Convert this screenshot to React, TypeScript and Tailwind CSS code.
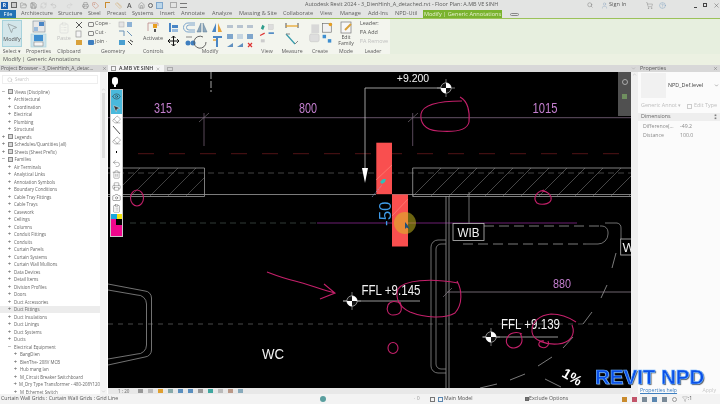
import { Camera, ChevronDown, ClipboardList, Eraser, Eye, Filter, FolderOpen, HelpCircle, Home, MousePointer2, Printer, Redo2, RefreshCw, Ruler, Save, Search, ShoppingCart, Tag, Trash2, Undo2, User, X } from 'lucide-react';

const tabs = [
    { label: 'Architecture', cls: 'w-[37px]' },
    { label: 'Structure', cls: 'w-[30px]' },
    { label: 'Steel', cls: 'w-[19px]' },
    { label: 'Precast', cls: 'w-[25px]' },
    { label: 'Systems', cls: 'w-[28px]' },
    { label: 'Insert', cls: 'w-[21px]' },
    { label: 'Annotate', cls: 'w-[31px]' },
    { label: 'Analyze', cls: 'w-[27px]' },
    { label: 'Massing & Site', cls: 'w-[44px]' },
    { label: 'Collaborate', cls: 'w-[37px]' },
    { label: 'View', cls: 'w-[20px]' },
    { label: 'Manage', cls: 'w-[28px]' },
    { label: 'Add-Ins', cls: 'w-[27px]' },
    { label: 'NPD-Util', cls: 'w-[27px]' },
];

// level: 0 discipline row, 1 category, 2 family
const tree: { label: string; level: number; open?: boolean; hover?: boolean; icon?: boolean }[] = [
    { label: 'Views (Discipline)', level: 0, open: true, icon: true },
    { label: 'Architectural', level: 1 },
    { label: 'Coordination', level: 1 },
    { label: 'Electrical', level: 1 },
    { label: 'Plumbing', level: 1 },
    { label: 'Structural', level: 1 },
    { label: 'Legends', level: 0, icon: true },
    { label: 'Schedules/Quantities (all)', level: 0, icon: true },
    { label: 'Sheets (Sheet Prefix)', level: 0, icon: true },
    { label: 'Families', level: 0, open: true, icon: true },
    { label: 'Air Terminals', level: 1 },
    { label: 'Analytical Links', level: 1 },
    { label: 'Annotation Symbols', level: 1 },
    { label: 'Boundary Conditions', level: 1 },
    { label: 'Cable Tray Fittings', level: 1 },
    { label: 'Cable Trays', level: 1 },
    { label: 'Casework', level: 1 },
    { label: 'Ceilings', level: 1 },
    { label: 'Columns', level: 1 },
    { label: 'Conduit Fittings', level: 1 },
    { label: 'Conduits', level: 1 },
    { label: 'Curtain Panels', level: 1 },
    { label: 'Curtain Systems', level: 1 },
    { label: 'Curtain Wall Mullions', level: 1 },
    { label: 'Data Devices', level: 1 },
    { label: 'Detail Items', level: 1 },
    { label: 'Division Profiles', level: 1 },
    { label: 'Doors', level: 1 },
    { label: 'Duct Accessories', level: 1 },
    { label: 'Duct Fittings', level: 1, hover: true },
    { label: 'Duct Insulations', level: 1 },
    { label: 'Duct Linings', level: 1 },
    { label: 'Duct Systems', level: 1 },
    { label: 'Ducts', level: 1 },
    { label: 'Electrical Equipment', level: 1, open: true },
    { label: 'BangDien', level: 2 },
    { label: 'BienThe- 208V MCB', level: 2 },
    { label: 'Hub mang lan', level: 2 },
    { label: 'M_Circuit Breaker Switchboard', level: 2 },
    { label: 'M_Dry Type Transformer - 480-208Y120', level: 2 },
    { label: 'M_Ethernet Switch', level: 2 },
];

function TreeRow({ label, level, open, hover, icon }: (typeof tree)[number]) {
    const indent = level === 0 ? 'pl-[1px]' : level === 1 ? 'pl-[7px]' : 'pl-[13px]';
    return (
        <div className={`h-[7.5px] shrink-0 flex items-center whitespace-nowrap ${indent} ${hover ? 'bg-[#ececec]' : ''}`}>
            <span className="w-[5px] text-center text-[6px] leading-none text-[#555]">{open ? '−' : '+'}</span>
            {icon ? <span className="ml-[1.5px] mr-[2px] w-[5px] h-[5px] border border-[#8a8a8a] bg-[#d8d8d8]" /> : <span className="w-[2px]" />}
            <span className="text-[4.4px] leading-none text-[#666]">{label}</span>
        </div>
    );
}

function RibbonGroup({ label, cls, children }: { label: string; cls: string; children?: React.ReactNode }) {
    return (
        <div className={`${cls} shrink-0 flex flex-col`}>
            <div className="flex-1 relative min-h-0">{children}</div>
            <div className="h-[6px] text-center text-[5.2px] leading-[6px] text-[#5c5c5c] whitespace-nowrap">{label}</div>
        </div>
    );
}

function SmallText({ children, gray, cls = '' }: { children: React.ReactNode; gray?: boolean; cls?: string }) {
    return <span className={`text-[5.4px] leading-none whitespace-nowrap ${gray ? 'text-[#c0c0c0]' : 'text-[#555]'} ${cls}`}>{children}</span>;
}

function ModifyIcons() {
    return (
        <svg width="92" height="29" viewBox="0 0 92 29" className="block mt-[1px] ml-[5px]">
            <rect x="1" y="3" width="2" height="9" fill="#4a86c5" />
            <rect x="4" y="5" width="6" height="3" fill="#4a86c5" />
            <rect x="4" y="9" width="6" height="3" fill="#9bbcdc" />
            <path d="M27 3h-7a4 4 0 0 0 0 9h7M27 5h-6a2.500 2.500 0 0 0 0 5h6" fill="none" stroke="#7fa6cc" />
            <path d="M29 12l4-9v9zM35 3l4 9h-4z" fill="#8fa9bd" stroke="#5f7f98" strokeWidth="0.5" />
            <path d="M44 12l4-9v9z" fill="#4a86c5" />
            <path d="M50 3l4 9h-4z" fill="#e8a33a" />
            <g transform="translate(-3 0)">
                <path d="M3 21h11M8.500 16v10M3 21l2-2M3 21l2 2M14 21l-2-2M14 21l-2 2M8.500 16l-2 2M8.500 16l2 2M8.500 26l-2-2M8.500 26l2-2" stroke="#111" fill="none" strokeWidth="1" />
            </g>
            <circle cx="20" cy="23" r="2.500" fill="#3f7fc0" />
            <circle cx="25" cy="23" r="2.500" fill="#3f7fc0" />
            <path d="M18 17h6" stroke="#888" strokeWidth="1" />
            <g transform="translate(-9 2)">
                <path d="M44 15a6 6 0 1 0 3 5" fill="none" stroke="#555" strokeWidth="0.900" />
            </g>
            <g transform="translate(-7 2)">
                <path d="M52 15h9M56 15v10" stroke="#4a86c5" strokeWidth="2" />
                <path d="M52 18h3" stroke="#e8a33a" strokeWidth="1.500" />
            </g>
            {[59, 69, 79].map(x => (
                <g key={x}>
                    <rect x={x} y="5" width="6" height="3" fill="#b8c4d0" />
                    <rect x={x} y="14" width="6" height="5" fill="#7fa6cc" opacity={x === 69 ? 0.4 : 1} />
                    {x !== 79 && <path d={`M${x} 27l6-4v4z`} fill="#5f8fbf" />}
                </g>
            ))}
            <path d="M80 23l4 4M84 23l-4 4" stroke="#d33" strokeWidth="1.200" />
        </svg>
    );
}

function Ribbon() {
    return (
        <div className="h-[36px] flex bg-[#e7efdf] border-t border-[#9cc25a]">
            <div className="w-[390px] flex bg-[#f3f5ee] pl-[2px]">
                <RibbonGroup label="Select ▾" cls="w-[20px]">
                    <div className="mt-[0.5px] w-[20px] h-[27px] bg-[#d3e6ea] border border-[#a6d2dc] flex flex-col items-center">
                        <MousePointer2 size={12} strokeWidth={0.8} className="text-[#555] mt-[1px]" />
                        <SmallText cls="mt-[3px]">Modify</SmallText>
                    </div>
                </RibbonGroup>
                <RibbonGroup label="Properties" cls="w-[33px]">
                    <svg width="30" height="29" viewBox="0 0 30 29" className="block ml-[3px]">
                        <rect x="8" y="2" width="12" height="11" fill="#e8e8e8" stroke="#7a8a98" strokeWidth="0.600" />
                        <rect x="14" y="3" width="5" height="4" fill="#4a86c5" />
                        <rect x="9" y="8" width="4" height="4" fill="#9bbcdc" />
                        <rect x="6" y="15" width="15" height="13" fill="#cfe3ea" stroke="#a6d2dc" strokeWidth="0.600" />
                        <rect x="9" y="16" width="9" height="6" fill="#3f8fd0" />
                        <rect x="9" y="23" width="9" height="4" fill="#f5f5f5" stroke="#777" strokeWidth="0.500" />
                    </svg>
                </RibbonGroup>
                <RibbonGroup label="Clipboard" cls="w-[28px]">
                    <div className="absolute left-[2px] top-[3px] w-[14px] flex flex-col items-center">
                        <ClipboardList size={12} strokeWidth={0.9} className="text-[#cfcfcf]" />
                        <SmallText gray cls="mt-[2px]">Paste</SmallText>
                    </div>
                    <svg width="10" height="28" viewBox="0 0 10 28" className="absolute left-[19px] top-0">
                        <path d="M2 3l6 6M8 3L2 9" stroke="#444" strokeWidth="0.900" />
                        <rect x="2" y="12" width="5" height="6" fill="#f4f4f4" stroke="#888" strokeWidth="0.600" />
                        <rect x="2" y="21" width="6" height="5" fill="#d9a13b" />
                    </svg>
                </RibbonGroup>
                <RibbonGroup label="Geometry" cls="w-[60px]">
                    <div className="absolute left-[5px] top-[2px] flex flex-col gap-[3px]">
                        {['Cope ·', 'Cut ·', 'Join ·'].map((t, i) => (
                            <div key={t} className="h-[6px] flex items-center gap-[1px]">
                                <span className={`w-[6px] h-[5px] rounded-[1px] ${i === 2 ? 'bg-[#3f7fc0]' : 'border border-[#888]'}`} />
                                <SmallText>{t}</SmallText>
                            </div>
                        ))}
                    </div>
                    <svg width="22" height="28" viewBox="0 0 22 28" className="absolute left-[35px] top-0">
                        <rect x="1" y="3" width="5" height="5" fill="#e4e4e4" stroke="#aaa" strokeWidth="0.500" />
                        <rect x="9" y="3" width="5" height="5" fill="#4a86c5" opacity="0.600" />
                        <path d="M1 12h5v5M9 12l5 5" stroke="#6b93b8" fill="none" />
                        <rect x="1" y="21" width="6" height="5" fill="#4a9fd0" />
                        <path d="M10 22l4 4M12 21l3 2" stroke="#444" />
                    </svg>
                </RibbonGroup>
                <RibbonGroup label="Controls" cls="w-[20px]">
                    <div className="absolute left-0 right-0 top-[2px] flex flex-col items-center">
                        <svg width="14" height="12" viewBox="0 0 14 12">
                            <path d="M2 2v8M2 2h10M12 2v3" stroke="#b88" fill="none" strokeWidth="0.800" />
                            <rect x="7" y="3" width="4" height="4" fill="#e8a020" />
                            <rect x="8" y="8" width="2" height="3" fill="#555" />
                        </svg>
                        <SmallText cls="mt-[3px]">Activate</SmallText>
                    </div>
                </RibbonGroup>
                <RibbonGroup label="Modify" cls="w-[94px]"><ModifyIcons /></RibbonGroup>
                <RibbonGroup label="View" cls="w-[20px]">
                    <svg width="20" height="29" viewBox="0 0 26 29" className="block">
                        <path d="M7 3l3 2-2 5-3-2z" fill="#2e9d8c" />
                        <rect x="15" y="3" width="6" height="6" fill="#ddd" stroke="#bbb" strokeWidth="0.500" />
                        <path d="M4 17l6-3" stroke="#d33" strokeWidth="1.500" />
                        <path d="M15 13h7v2h-7z" fill="#3f7fc0" />
                        <rect x="5" y="22" width="5" height="4" fill="#ccc" />
                    </svg>
                </RibbonGroup>
                <RibbonGroup label="Measure" cls="w-[30px]">
                    <svg width="24" height="29" viewBox="0 0 24 29" className="block ml-[6px]">
                        <path d="M3 4v5M15 4v5" stroke="#555" />
                        <path d="M3 7h12" stroke="#e8a020" strokeWidth="1.200" />
                        <path d="M3 15l9 10" stroke="#39a" strokeWidth="1.200" />
                        <path d="M3 15h4M12 25l3-3" stroke="#888" />
                    </svg>
                </RibbonGroup>
                <RibbonGroup label="Create" cls="w-[26px]">
                    <svg width="26" height="29" viewBox="0 0 30 29" className="block">
                        <rect x="5" y="4" width="9" height="10" fill="#d8d8d8" />
                        <rect x="3" y="15" width="11" height="9" rx="2" fill="#dedede" stroke="#bbb" strokeWidth="0.500" />
                        <rect x="18" y="3" width="10" height="10" fill="#f2f2f2" stroke="#666" strokeWidth="0.700" />
                        <circle cx="27" cy="4" r="2" fill="#e8a020" />
                        <rect x="18" y="16" width="4" height="4" fill="#3f8fd0" />
                        <rect x="24" y="21" width="4" height="4" fill="#3f8fd0" />
                    </svg>
                </RibbonGroup>
                <RibbonGroup label="Mode" cls="w-[26px]">
                    <div className="absolute left-0 right-0 top-[2px] flex flex-col items-center">
                        <svg width="13" height="13" viewBox="0 0 13 13">
                            <rect x="1" y="1" width="10" height="11" fill="#f7f7f7" stroke="#777" strokeWidth="0.700" />
                            <path d="M5 9l6-6" stroke="#d9a13b" strokeWidth="2" />
                        </svg>
                        <span className="text-[5.2px] leading-[6px] text-[#555] text-center">Edit<br />Family</span>
                    </div>
                </RibbonGroup>
                <RibbonGroup label="Leader" cls="w-[28px]">
                    <div className="absolute left-[1px] top-[2px] flex flex-col gap-[3.6px]">
                        <SmallText>Leader:</SmallText>
                        <SmallText>ᖴA Add</SmallText>
                        <SmallText gray>ᖴA Remove</SmallText>
                    </div>
                </RibbonGroup>
            </div>
        </div>
    );
}

function LevelMark({ x, y }: { x: number; y: number }) {
    return (
        <g>
            <path d={`M${x - 9} ${y}h18M${x} ${y - 9}v18`} stroke="#bdbdbd" strokeWidth="0.600" />
            <circle cx={x} cy={y} r="5.200" fill="#111" stroke="#ddd" strokeWidth="0.600" />
            <path d={`M${x} ${y}V${y - 5.2}A5.200 5.200 0 0 1 ${x + 5.2} ${y}z M${x} ${y}V${y + 5.2}A5.200 5.200 0 0 1 ${x - 5.2} ${y}z`} fill="#fff" />
        </g>
    );
}

const leftHatch = [112, 131, 150, 168, 186];
const rightHatch = [413, 431, 449, 467, 485, 503, 521, 539, 557, 575, 593, 611, 629];

function DrawingCanvas() {
    const pink = '#c4206a';
    const dim = '#c47fcf';
    return (
        <svg viewBox="108 72 523 316" className="absolute inset-0 w-full h-full" fontFamily="'Liberation Sans', Arial, sans-serif">
            <path d="M211 72v20" stroke="#8a8a8a" strokeWidth="1.200" strokeDasharray="7 2" />

            {/* dimensions */}
            <path d="M108 117.700H631" stroke="#6e5a70" strokeWidth="0.900" />
            <path d="M204 113V146M412.700 113V146" stroke="#6e5a70" strokeWidth="0.800" />
            <path d="M199 122l10-9M408 122l10-9M123 113l-5 5" stroke="#8a7f8a" strokeWidth="0.600" />
            <text x="163" y="113" fill={dim} fontSize="14" textAnchor="middle" textLength="18" lengthAdjust="spacingAndGlyphs">315</text>
            <text x="308" y="113" fill={dim} fontSize="14" textAnchor="middle" textLength="18" lengthAdjust="spacingAndGlyphs">800</text>
            <text x="545" y="113" fill={dim} fontSize="14" textAnchor="middle" textLength="25" lengthAdjust="spacingAndGlyphs">1015</text>

            {/* grid and reference lines */}
            <path d="M138 153.700H625" stroke="#5a1518" strokeWidth="0.900" strokeDasharray="16 15" />
            <path d="M108 173H631" stroke="#5e5e5e" strokeWidth="0.700" strokeDasharray="6 4" />
            <path d="M130 223H317" stroke="#3e4a44" strokeWidth="0.800" strokeDasharray="6 4" />
            <path d="M317 223H577" stroke="#6c1f72" strokeWidth="1.100" />
            <path d="M108 324H631" stroke="#5a5a5a" strokeWidth="0.800" strokeDasharray="5 5" />

            {/* walls */}
            <clipPath id="left-wall"><rect x="108" y="168" width="96.500" height="28" /></clipPath>
            <g clipPath="url(#left-wall)" stroke="#6b6b6b" strokeWidth="0.600">
                {leftHatch.map(x => <path key={x} d={`M${x} 196l28-28`} />)}
            </g>
            <path d="M108 168H204.500V196.500H108" fill="none" stroke="#9a9a9a" strokeWidth="0.800" />
            <g stroke="#777" strokeWidth="0.600">
                {rightHatch.map(x => <path key={x} d={`M${x} 196l${x > 612 ? 18 : 28}-${x > 612 ? 18 : 28}`} />)}
            </g>
            <path d="M631 168H412.700V196.500H631" fill="none" stroke="#a0a0a0" strokeWidth="0.800" />
            <path d="M108 194.500H376M392 194.500H631" stroke="#9a9a9a" strokeWidth="0.800" />

            {/* lower structure */}
            <path d="M446 196V388M449 196V388" stroke="#9a9a9a" strokeWidth="0.800" />
            <path d="M469 192V225" stroke="#8a8a8a" strokeWidth="0.800" />
            <path d="M446 240h-8a7 7 0 0 0-7 7V366a7 7 0 0 0 7 7h8M446 244h-5a5 5 0 0 0-5 5V364a5 5 0 0 0 5 5h5" fill="none" stroke="#8a8a8a" strokeWidth="0.800" />
            <path d="M108 284l37 7a7 7 0 0 1 6.500 7V350a7 7 0 0 1-6.500 7l-37 8M108 290l29 5a9 9 0 0 1 9.500 9V345a9 9 0 0 1-9.500 9l-29 5" fill="none" stroke="#8f8f8f" strokeWidth="0.800" />
            <path d="M484 226H600M463 244H586" stroke="#9a9a9a" strokeWidth="0.800" strokeDasharray="10 5" />
            <path d="M600 226h2a6 6 0 0 1 6 6v2a10 10 0 0 1-10 10h-12M605 223h12a5 5 0 0 1 4 5v12" fill="none" stroke="#8a8a8a" strokeWidth="0.800" />
            <path d="M616 253l-4 15M607 285l-6 13M592 312l-9 12M573 337l-10 11M552 357l-14 9M525 374l-15 6M497 384l-17 4M545 379l16 8" stroke="#9a9a9a" strokeWidth="0.800" fill="none" />

            {/* second dimension line */}
            <path d="M447 292H631" stroke="#8a7f8a" strokeWidth="0.800" />
            <path d="M443 297l9-9" stroke="#8a7f8a" strokeWidth="0.600" />
            <text x="562" y="288" fill={dim} fontSize="13.500" textAnchor="middle" textLength="18" lengthAdjust="spacingAndGlyphs">880</text>

            {/* selected element */}
            <rect x="376.300" y="142.700" width="15.700" height="51.500" fill="#f94f4f" />
            <rect x="392" y="194.500" width="16" height="52" fill="#f94f4f" />
            <path d="M376 180l16-15M392 216l16-17" stroke="#ff9a8a" strokeWidth="0.500" />
            <path d="M372 197l10-12" stroke="#9ad" strokeWidth="0.600" strokeDasharray="2 1" />
            <path d="M380 182l3-3 3 0-1 3-3 2z" fill="#2fc0b8" />
            <text transform="translate(391 226) rotate(-90)" fill="#3f9be8" fontSize="17">-50</text>
            <circle cx="405" cy="223" r="11" fill="#d8c820" opacity="0.500" />
            <path d="M405 222l0 7 1.500-1.500 3 1.500-2-4z" fill="#1d4f7a" />

            {/* level */}
            <path d="M441 88H365V168" fill="none" stroke="#c4c4c4" strokeWidth="0.800" />
            <path d="M362 168h6l-3 15z" fill="#fff" />
            <text x="413" y="82" fill="#f2f2f2" fontSize="10.500" textAnchor="middle">+9.200</text>
            <LevelMark x={446} y={88} />

            {/* tags and notes */}
            <rect x="453" y="223.500" width="31" height="17" fill="#000" stroke="#bdbdbd" strokeWidth="0.800" />
            <text x="468.500" y="237" fill="#f2f2f2" fontSize="13.500" textAnchor="middle" textLength="22" lengthAdjust="spacingAndGlyphs">WIB</text>
            <rect x="620.700" y="239" width="12" height="16" fill="#000" stroke="#bdbdbd" strokeWidth="0.800" />
            <text x="622.500" y="252" fill="#f2f2f2" fontSize="13">W</text>

            <path d="M343 301H420" stroke="#bdbdbd" strokeWidth="0.800" />
            <LevelMark x={352} y={301} />
            <text x="361.500" y="295" fill="#f2f2f2" fontSize="14" textLength="59" lengthAdjust="spacingAndGlyphs">FFL +9.145</text>
            <path d="M483 337H558" stroke="#bdbdbd" strokeWidth="0.800" />
            <LevelMark x={491} y={337} />
            <text x="501" y="329" fill="#f2f2f2" fontSize="14" textLength="59" lengthAdjust="spacingAndGlyphs">FFL +9.139</text>
            <text x="273" y="359" fill="#f2f2f2" fontSize="14" textAnchor="middle" textLength="22" lengthAdjust="spacingAndGlyphs">WC</text>
            <text transform="translate(561 376) rotate(30)" fill="#fff" fontSize="14" fontWeight="700">1%</text>

            {/* red-lining */}
            <g fill="none" stroke={pink} strokeWidth="1.100">
                <path d="M267 272C280 277 286 279 295 281C308 284 322 290 335 293M324 284L335 293L320 299" />
                <path d="M460 97C468 101 470 112 469 122C467 132 450 132 438 131C424 130 420 122 421 114C423 103 445 101 462 101" />
                <ellipse cx="137" cy="198" rx="6.500" ry="8" />
                <path d="M540 191C548 190 552 196 551 200C549 205 540 205 537 203C533 199 535 192 544 190" />
                <path d="M457 281C462 290 463 304 455 313C445 319 425 318 410 312C399 307 395 298 398 289C404 280 430 278 458 283" />
                <path d="M400 302C403 310 401 315 393 315C388 315 386 310 388 305C390 301 396 300 401 304" />
                <ellipse cx="393" cy="348" rx="5" ry="5.500" />
                <path d="M572 325C576 335 570 343 558 344C545 345 533 340 532 332C531 322 540 315 551 314C562 314 570 318 576 322" />
                <path d="M520 333C524 340 522 347 514 348C508 348 505 343 507 338C509 333 516 331 522 334" />
                <path d="M548 341C550 346 545 349 541 347C537 345 539 340 544 341" />
            </g>
        </svg>
    );
}

function CanvasToolbar() {
    const iconCls = 'text-[#444]';
    return (
        <div className="absolute left-[2px] top-[17px] w-[13px] h-[148px] bg-white border border-[#c8c8c8] flex flex-col items-center">
            <div className="w-full h-[12px] bg-[#49b9dc] flex items-center justify-center"><Eye size={9} strokeWidth={1.4} className="text-[#333]" /></div>
            <div className="w-full h-[12px] bg-[#49b9dc] flex items-center justify-center"><MousePointer2 size={9} strokeWidth={1.2} className="text-white fill-[#333]" /></div>
            <div className="h-[11px] flex items-center"><Eraser size={9} strokeWidth={1} className={iconCls} /></div>
            <svg width="9" height="10" viewBox="0 0 9 10"><path d="M1 1l7 8" stroke="#555" strokeWidth="1" /></svg>
            <div className="h-[11px] flex items-center"><Eraser size={9} strokeWidth={1} className={iconCls} /></div>
            <div className="h-[12px] flex items-center"><span className="w-[1.500px] h-[1.500px] bg-black" /></div>
            <div className="h-[11px] flex items-center"><Undo2 size={9} strokeWidth={1} className={iconCls} /></div>
            <div className="h-[11px] flex items-center"><Trash2 size={9} strokeWidth={1} className={iconCls} /></div>
            <div className="h-[12px] flex items-center"><Printer size={9} strokeWidth={1} className={iconCls} /></div>
            <div className="h-[11px] flex items-center"><Camera size={9} strokeWidth={1.2} className={iconCls} /></div>
            <div className="h-[11px] flex items-center"><ClipboardList size={9} strokeWidth={1} className={iconCls} /></div>
            <div className="w-full h-[5px] flex">
                <span className="flex-1 bg-[#18a7dc]" />
                <span className="flex-1 bg-[#f4e60f]" />
            </div>
            <div className="w-full flex-1 bg-[#f0068c] relative">
                <span className="absolute right-0 top-0 w-[6px] h-[6px] bg-black" />
            </div>
        </div>
    );
}

function ViewBar() {
    return (
        <div className="h-[6px] bg-[#e8e8e8] flex items-center text-[#666]">
            <span className="ml-[10px] w-[20px] text-[4.600px] leading-none">1 : 20</span>
            <div className="flex items-center gap-[5px]">
                {['bg-[#999]', 'bg-[#bbb]', 'bg-[#e0a030]', 'bg-[#8aa]', 'bg-[#5a8fbf]', 'bg-[#5a8fbf]', 'bg-[#999]', 'bg-[#3fa7a0]', 'bg-[#bbb]', 'bg-[#b98]', 'bg-[#8ab]'].map((c, i) => (
                    <span key={i} className={`w-[5px] h-[4px] ${c}`} />
                ))}
            </div>
        </div>
    );
}

export default function App() {
    return (
        <div className="relative w-[720px] h-[404px] overflow-hidden flex flex-col bg-[#e3e4e3] blur-[0.35px] leading-none font-['Open_Sans',sans-serif]">
            {/* title bar */}
            <div className="h-[10px] flex items-center text-[#5a5a5a]">
                <span className="ml-[1px] w-[7px] h-[7px] bg-[#1f62b0] text-white text-[5px] leading-[7px] text-center font-bold">R</span>
                <div className="ml-[3px] w-[200px] flex items-center gap-[3px]">
                    <span className="w-[6px] h-[6px] border border-[#666] bg-[#ccc]" />
                    <FolderOpen size={7} strokeWidth={1.2} />
                    <Save size={7} strokeWidth={1.5} />
                    <RefreshCw size={7} strokeWidth={1} className="text-[#aaa]" />
                    <Undo2 size={7} strokeWidth={1} className="text-[#999]" />
                    <Redo2 size={7} strokeWidth={1} className="ml-[6px] text-[#bbb]" />
                    <Printer size={7} strokeWidth={1.2} className="ml-[6px]" />
                    <Tag size={7} strokeWidth={1.2} className="text-[#c05a3a]" />
                    <span className="ml-[3px] w-[5px] h-[6px] border-t border-l border-[#c98b2e]" />
                    <Ruler size={7} strokeWidth={1} className="ml-[2px] text-[#c98b2e]" />
                    <span className="text-[7px] leading-none font-semibold ml-[2px]">A</span>
                    <Home size={7} strokeWidth={1.2} className="ml-[3px]" />
                    <span className="w-[5px] h-[5px] rounded-full border border-[#666]" />
                    <span className="w-[7px] h-[7px] bg-[#bcd7ea] border border-[#7fa6cc]" />
                    <span className="ml-[4px] w-[7px] h-[6px] border border-[#aaa]" />
                    <span className="w-[7px] h-[5px] border-t border-b border-[#777]" />
                </div>
                <span className="ml-[94px] text-[5.45px] leading-none whitespace-nowrap w-[282px]">Autodesk Revit 2024 - 3_DienHinh_A_detached.rvt - Floor Plan: A.MB VE SINH</span>
                <Search size={6} strokeWidth={1.4} />
                <User size={7} strokeWidth={1} className="ml-[8px] text-[#6b8fb5]" />
                <span className="ml-[1px] w-[30px] text-[5.6px] leading-none">Sign In</span>
                <ShoppingCart size={7} strokeWidth={1} className="ml-[7px]" />
                <HelpCircle size={7} strokeWidth={1} className="ml-[6px] text-[#4a7fb0]" />
                <span className="ml-[28px] w-[3px] h-[1px] bg-[#444] self-end mb-[2px]" />
                <span className="ml-[6px] w-[4px] h-[4px] border border-[#444]" />
                <X size={7} strokeWidth={1.6} className="ml-[6px]" />
            </div>

            {/* tabs */}
            <div className="h-[8px] flex items-center text-[5.600px] leading-none text-[#5e5e5e]">
                <span className="w-[16px] h-full bg-[#2272b5] text-white text-center leading-[8px] mr-[5px]">File</span>
                {tabs.map(t => <span key={t.label} className={`${t.cls} whitespace-nowrap`}>{t.label}</span>)}
                <span className="ml-[1px] w-[79px] h-full bg-[#7ab32e] text-[#e8f0d0] text-center leading-[8px] whitespace-nowrap">Modify | Generic Annotations</span>
                <span className="ml-[8px] w-[9px] h-[3px] rounded-full border border-[#888]" />
            </div>

            <Ribbon />

            {/* options bar */}
            <div className="h-[11px] bg-[#ecf1e2] flex items-center pl-[3px] text-[5.600px] leading-none text-[#5a5a5a]">Modify | Generic Annotations</div>

            <div className="flex-1 min-h-0 flex">
                {/* project browser */}
                <div className="w-[108px] shrink-0 flex flex-col bg-white">
                    <div className="h-[7px] bg-[#d8d8d8] flex items-center px-[1px] text-[5px] leading-none text-[#5a5a5a] whitespace-nowrap">
                        <span className="w-[101px]">Project Browser - 3_DienHinh_A_detac...</span>
                        <X size={5} strokeWidth={1.6} />
                    </div>
                    <div className="flex-1 min-h-0 flex">
                        <div className="w-[100px] min-w-0 overflow-hidden">
                            <div className="mt-[3px] mx-[2px] h-[9px] border border-[#eeeeee] flex items-center pl-[4px] gap-[2px]">
                                <Search size={6} strokeWidth={1.2} className="text-[#999]" />
                                <span className="text-[4.400px] leading-none text-[#c4c4c4]">Search</span>
                            </div>
                            <div className="mt-[4px] flex flex-col">
                                {tree.map(item => <TreeRow key={item.label} {...item} />)}
                            </div>
                        </div>
                        <div className="w-[7px] bg-[#f4f4f4] flex flex-col items-center">
                            <ChevronDown size={5} strokeWidth={1.2} className="rotate-180 text-[#888] mt-[15px]" />
                            <span className="mt-[1px] w-[3px] h-[65px] bg-[#dedede]" />
                            <span className="flex-1" />
                            <ChevronDown size={5} strokeWidth={1.2} className="text-[#888]" />
                        </div>
                    </div>
                </div>

                {/* view */}
                <div className="flex-1 min-w-0 flex flex-col">
                    <div className="h-[7px] bg-[#d8d8d8] flex items-end">
                        <div className="h-[7px] w-[56px] bg-[#f4f4f4] flex items-center gap-[3px] pl-[3px] text-[5.200px] leading-none text-[#333] font-semibold whitespace-nowrap">
                            <span className="w-[5px] h-[5px] border border-[#999]" />
                            <span>A.MB VE SINH</span>
                            <X size={4} strokeWidth={1.6} />
                        </div>
                        <span className="ml-[3px] mb-[1px] w-[6px] h-[4px] border border-[#aaa]" />
                        <span className="flex-1" />
                        <ChevronDown size={5} strokeWidth={1.2} className="mb-[1px] mr-[2px] text-[#777]" />
                    </div>
                    <div className="flex-1 min-h-0 flex">
                        <div className="w-[523px] shrink-0 flex flex-col">
                            <div className="relative flex-1 min-h-0 bg-black overflow-hidden">
                                <DrawingCanvas />
                                <span className="absolute left-[4px] top-[5px] w-[6px] h-[8px] rounded-full bg-white" />
                                <span className="absolute left-[6px] top-[12px] w-[2px] h-[3px] bg-white" />
                                <CanvasToolbar />
                                <div className="absolute right-0 top-0 w-[13px] h-[44px] bg-[#505050] flex flex-col items-center gap-[9px] pt-[7px]">
                                    <span className="w-[6px] h-[6px] rounded-full border border-[#aaa]" />
                                    <span className="w-[5px] h-[5px] bg-[#6f8f5f]" />
                                </div>
                            </div>
                            <ViewBar />
                        </div>
                        <div className="flex-1 bg-[#f0f0f0] flex flex-col items-center">
                            <ChevronDown size={5} strokeWidth={1.2} className="rotate-180 text-[#888]" />
                        </div>
                    </div>
                </div>

                {/* properties */}
                <div className="w-[82px] shrink-0 flex flex-col bg-[#fbfbfb] text-[#8a8a8a]">
                    <div className="h-[7px] bg-[#d8d8d8] flex items-center justify-between px-[2px] text-[5.400px] leading-none text-[#555]">
                        <span>Properties</span>
                        <X size={5} strokeWidth={1.6} />
                    </div>
                    <div className="h-[27px] flex items-center pl-[3px]">
                        <span className="w-[25px] h-[25px] bg-[#f1f1f1]" />
                        <span className="ml-[2px] flex-1 text-[5.400px] leading-none text-[#444]">NPD_Def.level</span>
                        <ChevronDown size={5} className="mr-[1px] text-[#555]" />
                    </div>
                    <div className="h-[10px] mt-[2px] flex items-center pl-[3px] text-[5.400px] leading-none text-[#bdbdbd] whitespace-nowrap">
                        <span className="w-[46px]">Generic Annot ▾</span>
                        <span className="w-[5px] h-[5px] border border-[#ccc] mr-[2px]" />
                        <span>Edit Type</span>
                    </div>
                    <div className="h-[8px] mt-[2px] bg-[#eeeeee] flex items-center justify-between px-[3px] text-[5.400px] leading-none text-[#666]">
                        <span>Dimensions</span>
                        <span>⁑</span>
                    </div>
                    <div className="mt-[1px] h-[9px] flex items-center pl-[5px] text-[5.200px] leading-none whitespace-nowrap">
                        <span className="w-[37px]">Difference(...</span><span>-49.2</span>
                    </div>
                    <div className="h-[9px] flex items-center pl-[5px] text-[5.200px] leading-none whitespace-nowrap">
                        <span className="w-[37px]">Distance</span><span>100.0</span>
                    </div>
                    <div className="flex-1" />
                    <div className="h-[7px] flex items-center justify-between pl-[2px] pr-[4px] text-[5.200px] leading-none">
                        <span className="text-[#3f7fc0] underline">Properties help</span>
                        <span className="text-[#c8c8c8]">Apply</span>
                    </div>
                </div>
            </div>

            {/* status bar */}
            <div className="h-[10px] bg-[#f3f3f3] flex items-center text-[5.200px] leading-none text-[#555] whitespace-nowrap">
                <span className="w-[320px] pl-[1px]">Curtain Wall Grids : Curtain Wall Grids : Grid Line</span>
                <span className="w-[6px] h-[6px] rounded-full bg-[#5a9f9f]" />
                <span className="ml-[88px] w-[5px] text-[#999]">· 0</span>
                <span className="ml-[11px] w-[5px] h-[5px] border border-[#777]" />
                <span className="ml-[3px] w-[5px] h-[5px] border border-[#5a86b0]" />
                <span className="ml-[1px] w-[81px]">Main Model</span>
                <span className="w-[4px] h-[4px] border border-[#666] bg-[#777]" />
                <span className="w-[93px]">Exclude Options</span>
                <div className="flex items-center gap-[5px]">
                    <span className="w-[5px] h-[5px] bg-[#c98b2e]" />
                    <span className="w-[5px] h-[5px] bg-[#c2556a]" />
                    <span className="w-[5px] h-[5px] bg-[#7a8a98]" />
                    <span className="w-[5px] h-[5px] bg-[#5a86b0]" />
                    <span className="w-[5px] h-[5px] bg-[#7a8a98]" />
                    <span className="w-[5px] h-[5px] rounded-full border border-[#999]" />
                    <Filter size={6} strokeWidth={1} />
                </div>
                <span>:1</span>
            </div>

            {/* watermark */}
            <span className="absolute left-[595px] top-[367px] text-[20.500px] leading-[20px] font-black text-[#0b4fe8] whitespace-nowrap font-['Liberation_Sans',sans-serif] [-webkit-text-stroke:0.7px_#6fb4ff] [text-shadow:1px_1px_1px_#555]">REVIT NPD</span>
        </div>
    );
}
